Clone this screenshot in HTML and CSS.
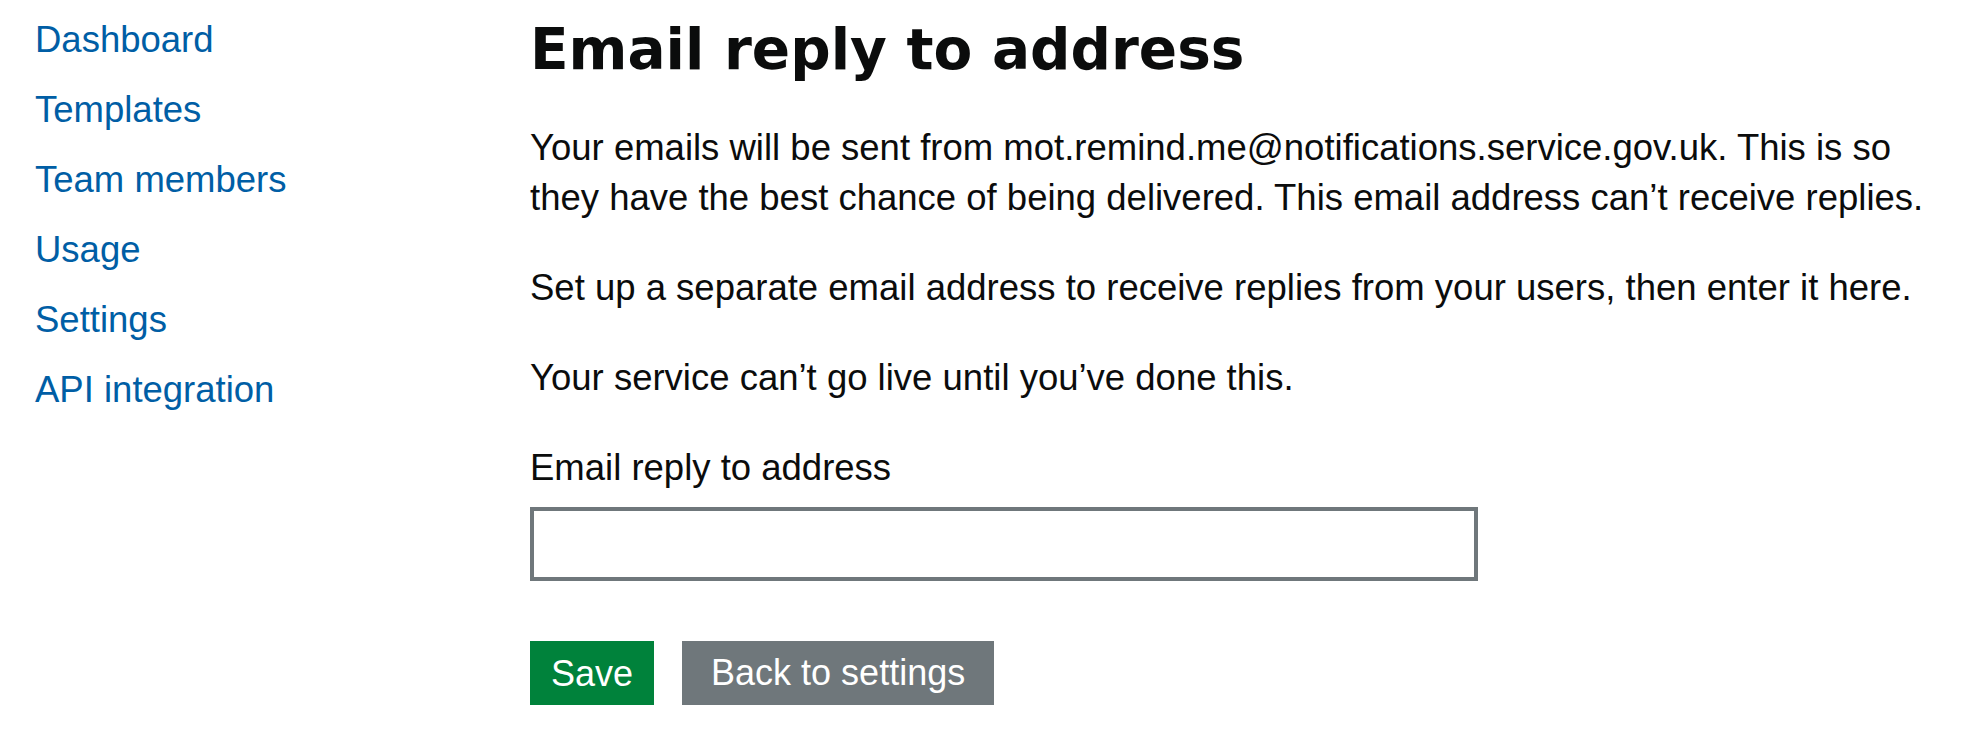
FILE: index.html
```html
<!DOCTYPE html>
<html lang="en">
<head>
<meta charset="utf-8">
<title>Email reply to address</title>
<link rel="stylesheet" href="styles.css">
</head>
<body>
<div class="page">
  <nav class="side-nav">
    <ul class="nav-list">
      <li class="nav-item"><a class="nav-link" href="#">Dashboard</a></li>
      <li class="nav-item"><a class="nav-link" href="#">Templates</a></li>
      <li class="nav-item"><a class="nav-link" href="#">Team members</a></li>
      <li class="nav-item"><a class="nav-link" href="#">Usage</a></li>
      <li class="nav-item"><a class="nav-link" href="#">Settings</a></li>
      <li class="nav-item"><a class="nav-link" href="#">API integration</a></li>
    </ul>
  </nav>
  <main class="content">
    <h1 class="heading-large">Email reply to address</h1>
    <p class="body-text">Your emails will be sent from mot.remind.me@notifications.service.gov.uk. This is so they have the best chance of being delivered. This email address can’t receive replies.</p>
    <p class="body-text">Set up a separate email address to receive replies from your users, then enter it here.</p>
    <p class="body-text">Your service can’t go live until you’ve done this.</p>
    <form class="form" action="#">
      <label class="form-label" for="email_address">Email reply to address</label>
      <input class="form-control" id="email_address" type="text">
      <div class="actions">
        <button class="button" type="button">Save</button>
        <a class="button button-secondary" href="#">Back to settings</a>
      </div>
    </form>
  </main>
</div>
</body>
</html>
```
FILE: styles.css
```css
html, body {
  margin: 0;
  padding: 0;
  background: #ffffff;
}

body {
  font-family: "Liberation Sans", Arial, sans-serif;
  font-size: 36.5px;
  color: #0b0c0c;
}

.page {
  display: grid;
  grid-template-columns: 495px 1425px;
  padding-left: 35px;
}

.nav-list {
  list-style: none;
  margin: 0;
  padding: 15px 0 0;
}

.nav-item {
  line-height: 50px;
  margin-bottom: 20px;
}

.nav-link {
  color: #005ea5;
  text-decoration: none;
}

.content {
  padding-top: 20px;
}

.heading-large {
  font-family: "DejaVu Sans", "Liberation Sans", sans-serif;
  font-weight: bold;
  font-size: 56.5px;
  line-height: 60px;
  margin: 0 0 43px;
  color: #0b0c0c;
}

.body-text {
  line-height: 50px;
  margin: 0 0 40px;
}

.form {
  margin: 0;
}

.form-label {
  display: block;
  line-height: 50px;
  margin-bottom: 14px;
}

.form-control {
  display: block;
  box-sizing: border-box;
  width: 948px;
  height: 74px;
  margin: 0 0 60px;
  padding: 8px 10px;
  border: 4px solid #6f777b;
  border-radius: 0;
  font-family: inherit;
  font-size: 36px;
  background: #ffffff;
  outline: none;
}

.actions {
  display: flex;
  gap: 28px;
  align-items: flex-start;
}

.button {
  display: inline-block;
  box-sizing: border-box;
  height: 64px;
  line-height: 63px;
  padding: 0 21px;
  border: 0;
  border-radius: 0;
  background: #00823b;
  color: #ffffff;
  font-family: inherit;
  font-size: 36px;
  text-decoration: none;
  box-shadow: 0 4px 0 #003618;
  cursor: pointer;
}

.button-secondary {
  padding: 0 29px;
  background: #6f777b;
  box-shadow: 0 4px 0 #4b5053;
}
```
